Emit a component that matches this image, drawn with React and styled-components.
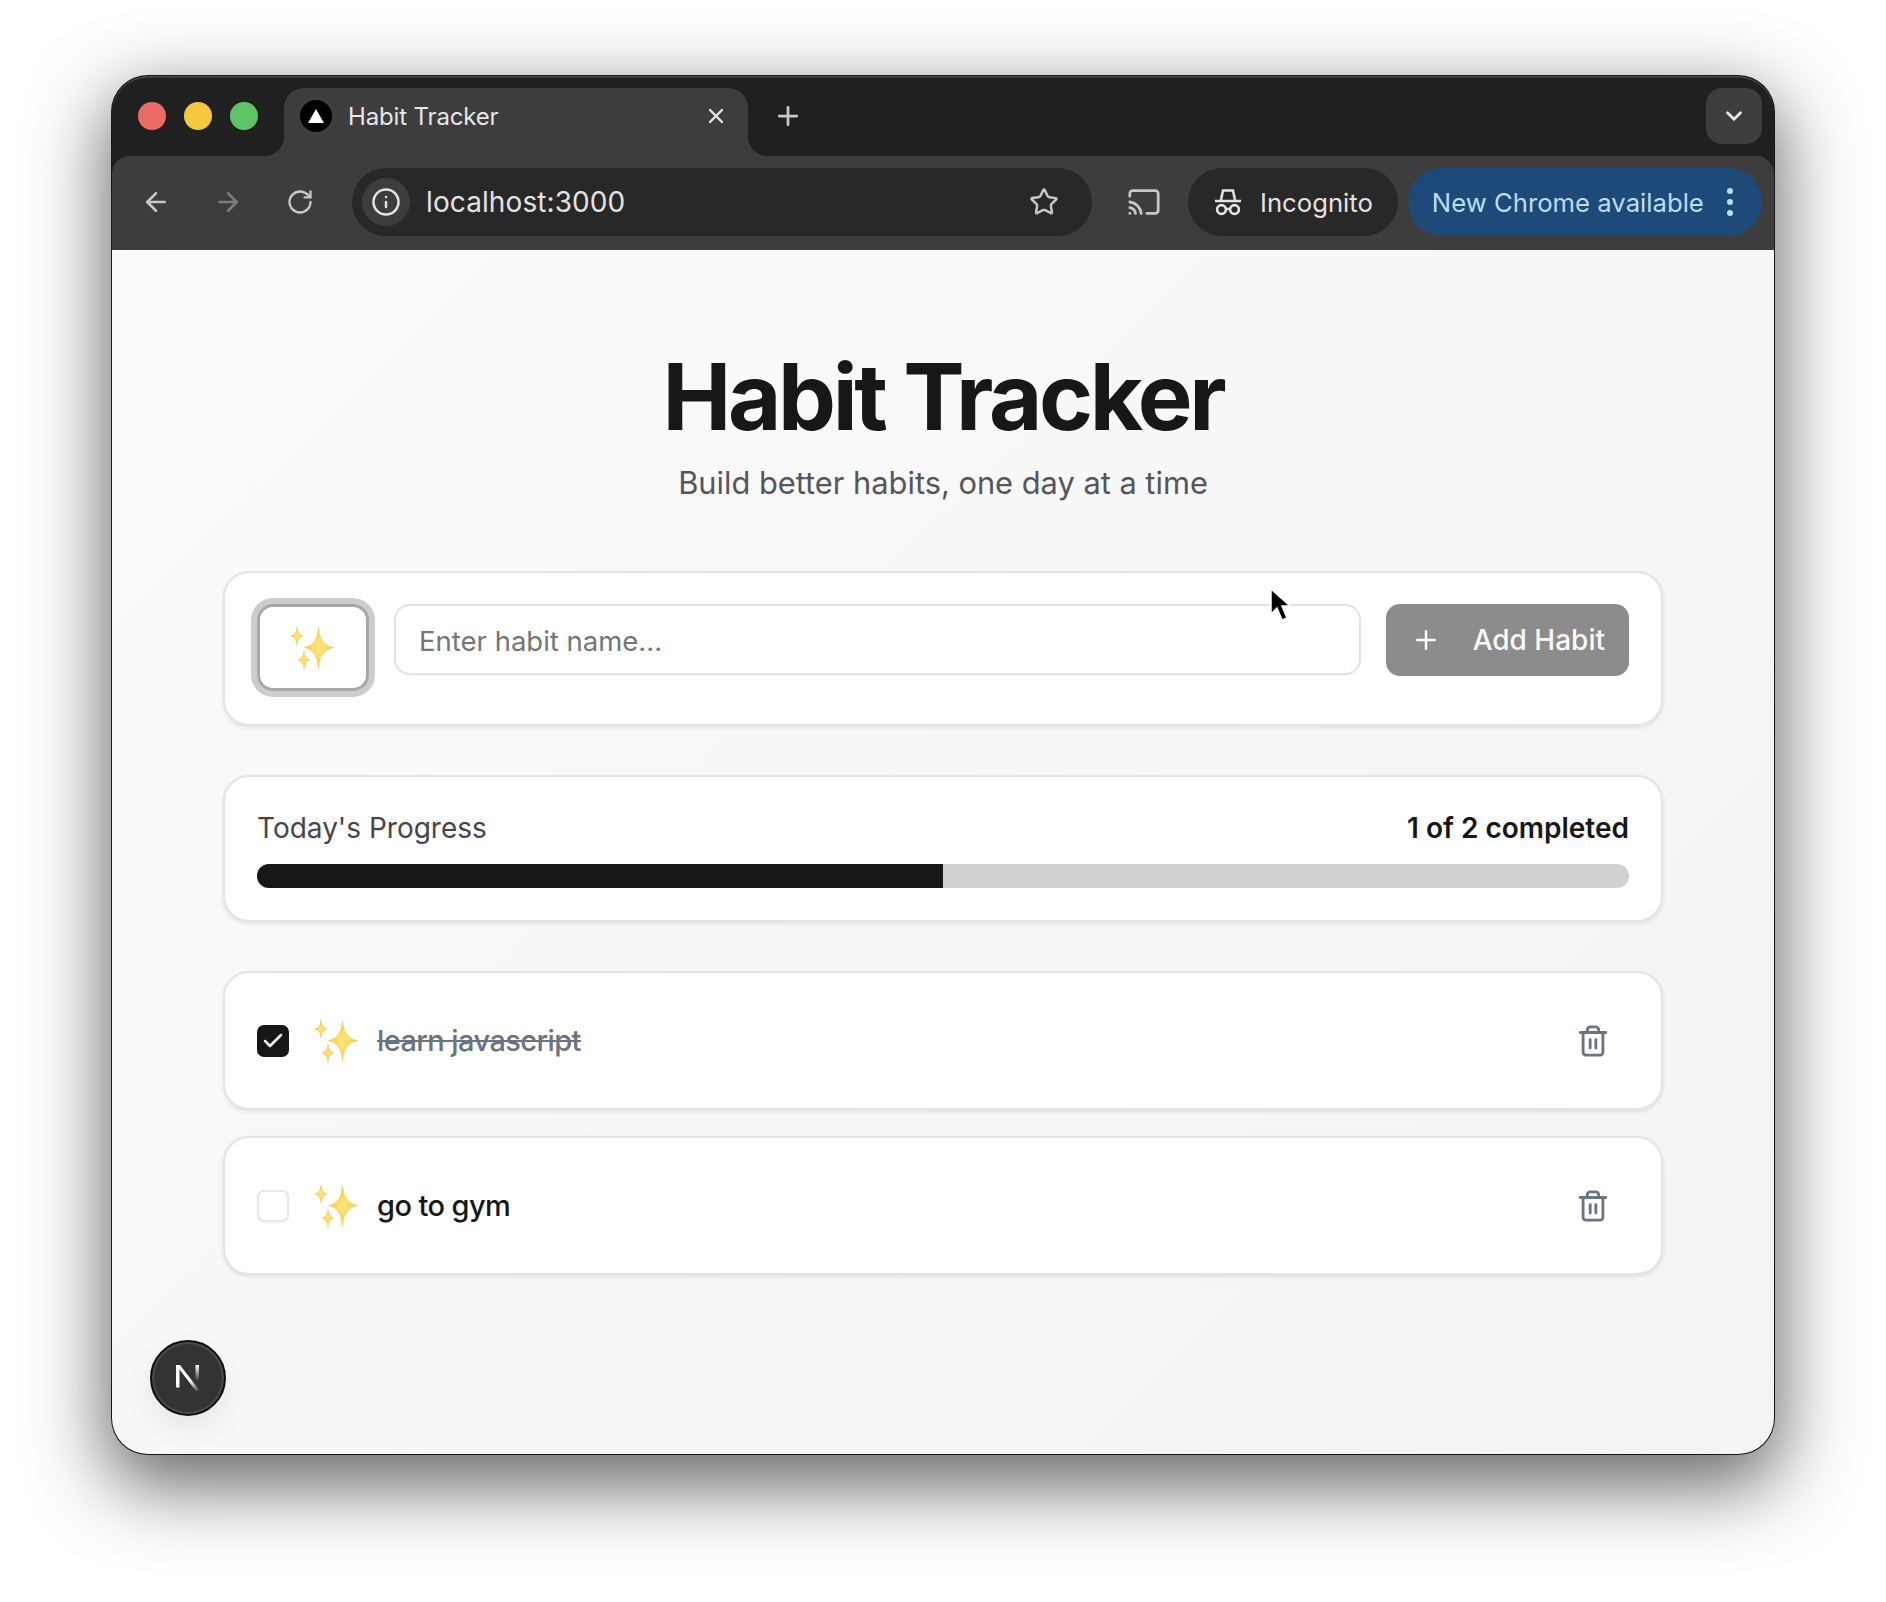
import React from 'react';
import styled, { createGlobalStyle } from 'styled-components';
import { ArrowLeft, ArrowRight, RotateCw, Info, Star, Cast, X, Plus, ChevronDown, Check, Trash2 } from 'lucide-react';

const Global = createGlobalStyle`
  html, body { margin: 0; padding: 0; background: #fff; }
  body { font-family: Inter, "Liberation Sans", sans-serif; -webkit-font-smoothing: antialiased; }
  * { box-sizing: border-box; }
`;

const Page = styled.div`
  width: 1886px;
  height: 1602px;
  padding: 76px 112px 0;
  overflow: hidden;
`;
const Window = styled.div`
  width: 1662px;
  height: 1378px;
  border-radius: 36px;
  overflow: hidden;
  background: #202020;
  display: flex;
  flex-direction: column;
  box-shadow: 0 0 0 1px #161616, 0 26px 76px 6px rgba(0, 0, 0, 0.6);
`;
const TabBar = styled.div`
  height: 80px;
  flex: none;
  display: flex;
  align-items: flex-start;
  padding: 12px 12px 0 26px;
  background: #202020;
  border-radius: 36px 36px 0 0;
  box-shadow: inset 0 1.5px 0 #4a4a4a;
`;
const Lights = styled.div`
  display: flex;
  gap: 18px;
  margin-top: 14px;
  margin-right: 26px;
`;
const Light = styled.span`
  width: 28px;
  height: 28px;
  border-radius: 50%;
  background: ${p => p.$c};
`;
const Tab = styled.div`
  position: relative;
  width: 464px;
  height: 68px;
  background: #3d3d3d;
  border-radius: 20px 20px 0 0;
  display: flex;
  align-items: center;
  padding: 0 20px 12px 16px;
  color: #e6e6e6;
  font-size: 24px;
  &::before, &::after {
    content: '';
    position: absolute;
    bottom: 0;
    width: 20px;
    height: 20px;
  }
  &::before { left: -20px; background: radial-gradient(circle at 0 0, transparent 20px, #3d3d3d 20.5px); }
  &::after { right: -20px; background: radial-gradient(circle at 100% 0, transparent 20px, #3d3d3d 20.5px); }
`;
const Favicon = styled.span`
  width: 32px;
  height: 32px;
  border-radius: 50%;
  background: #000;
  flex: none;
  display: flex;
  align-items: center;
  justify-content: center;
  margin-right: 16px;
`;
const TabTitle = styled.span`
  flex: 1;
  letter-spacing: -0.15px;
`;
const NewTab = styled.div`
  margin: 13px 0 0 25px;
  color: #c8c8c8;
  display: flex;
`;
const TabList = styled.div`
  margin-left: auto;
  width: 56px;
  height: 56px;
  border-radius: 16px;
  background: #3d3d3d;
  color: #e6e6e6;
  display: flex;
  align-items: center;
  justify-content: center;
`;
const Toolbar = styled.div`
  height: 94px;
  flex: none;
  background: #3d3d3d;
  border-radius: 18px 18px 0 0;
  display: flex;
  align-items: center;
  padding: 0 12px 2px 29px;
`;
const NavBtn = styled.span`
  display: flex;
  color: ${p => (p.$dim ? '#7d7d7d' : '#c7c7c7')};
  margin-right: ${p => p.$mr}px;
`;
const Omni = styled.div`
  width: 740px;
  height: 68px;
  flex: none;
  border-radius: 34px;
  background: #282828;
  display: flex;
  align-items: center;
  padding: 0 33px 0 10px;
  color: #e3e3e3;
`;
const InfoChip = styled.span`
  width: 48px;
  height: 48px;
  border-radius: 50%;
  background: #3d3d3d;
  display: flex;
  align-items: center;
  justify-content: center;
  margin-right: 16px;
`;
const Url = styled.span`
  flex: 1;
  font-size: 28px;
  letter-spacing: 0.1px;
`;
const CastWrap = styled.span`
  display: flex;
  color: #c7c7c7;
  margin: 0 27px 0 35px;
`;
const Pill = styled.div`
  height: 68px;
  border-radius: 34px;
  flex: none;
  display: flex;
  align-items: center;
  background: ${p => p.$bg};
  color: ${p => p.$fg};
  font-size: 25.7px;
  padding: ${p => p.$pad};
  margin-right: ${p => p.$mr || 0}px;
`;
const PillText = styled.span`
  margin-left: ${p => p.$ml || 0}px;
  white-space: nowrap;
`;
const Dots = styled.span`
  display: flex;
  flex-direction: column;
  gap: 5px;
  margin-left: 23px;
  & > i { width: 6px; height: 6px; border-radius: 50%; background: #bcdcf8; display: block; }
`;
const Content = styled.main`
  position: relative;
  flex: 1;
  background: linear-gradient(135deg, #fbfbfb, #f4f4f4);
  padding: 0 111px;
`;
const Header = styled.header`
  text-align: center;
  padding-top: 91px;
  margin-bottom: 66px;
`;
const Title = styled.h1`
  margin: 0;
  font-size: 92px;
  line-height: 112px;
  font-weight: 700;
  color: #171717;
  letter-spacing: -0.036em;
`;
const Sub = styled.p`
  margin: 8px 0 0;
  font-size: 30.8px;
  line-height: 44px;
  color: #55555c;
`;
const Card = styled.section`
  background: #fff;
  border: 2px solid #e4e4e4;
  border-radius: 26px;
  box-shadow: 0 2px 4px rgba(0, 0, 0, 0.09);
`;
const AddCard = styled(Card)`
  height: 155px;
  padding: 31px 32px 0 32px;
  display: flex;
  align-items: flex-start;
  gap: 25px;
  margin-bottom: 49px;
`;
const EmojiBtn = styled.div`
  width: 112px;
  height: 87px;
  flex: none;
  padding-right: 2px;
  border: 3px solid #a8a8a8;
  border-radius: 16px;
  background: #fff;
  box-shadow: 0 0 0 6px #cdcdcd;
  display: flex;
  align-items: center;
  justify-content: center;
`;
const NameInput = styled.input`
  flex: 1;
  min-width: 0;
  height: 71px;
  border: 2px solid #e3e3e3;
  border-radius: 16px;
  background: #fff;
  padding: 2px 23px 0;
  font: 400 27.5px Inter, sans-serif;
  color: #171717;
  outline: none;
  box-shadow: 0 1px 2px rgba(0, 0, 0, 0.05);
  &::placeholder { color: #757575; opacity: 1; }
`;
const AddBtn = styled.div`
  width: 243px;
  height: 72px;
  flex: none;
  border-radius: 14px;
  background: #8c8c8c;
  color: #fafafa;
  font-size: 28px;
  font-weight: 500;
  display: flex;
  align-items: center;
  padding: 0 24px 0 25px;
  justify-content: space-between;
`;
const ProgressCard = styled(Card)`
  height: 147px;
  padding: 32px 32px 0;
  margin-bottom: 49px;
`;
const ProgressHead = styled.div`
  display: flex;
  justify-content: space-between;
  align-items: center;
  line-height: 38px;
  margin-bottom: 17px;
`;
const ProgressLabel = styled.span`
  color: #45454a;
  font-size: 28px;
  font-weight: 400;
`;
const ProgressCount = styled.span`
  color: #171717;
  font-size: 28px;
  font-weight: 600;
`;
const Track = styled.div`
  height: 24px;
  border-radius: 12px;
  background: #d1d1d1;
  overflow: hidden;
`;
const Fill = styled.div`
  height: 100%;
  background: #171717;
`;
const HabitList = styled.div`
  display: flex;
  flex-direction: column;
  gap: 26px;
`;
const HabitCard = styled(Card)`
  height: 139px;
  display: flex;
  align-items: center;
  padding: 0 51px 0 32px;
`;
const Box = styled.span`
  width: 32px;
  height: 32px;
  flex: none;
  border-radius: 7px;
  display: flex;
  align-items: center;
  justify-content: center;
  background: ${p => (p.$on ? '#171717' : '#fff')};
  border: ${p => (p.$on ? 'none' : '2px solid #e8e8e8')};
  color: #fff;
  box-shadow: ${p => (p.$on ? 'none' : '0 1px 2px rgba(0,0,0,.05)')};
  margin-right: 26px;
`;
const HabitName = styled.span`
  flex: 1;
  margin-left: 19px;
  font-size: 29px;
  font-weight: 500;
  letter-spacing: -0.02em;
  color: ${p => (p.$done ? '#6b7280' : '#171717')};
  text-decoration: ${p => (p.$done ? 'line-through' : 'none')};
`;
const TrashBtn = styled.span`
  display: flex;
  color: #6b7280;
`;
const DevBadge = styled.div`
  position: absolute;
  left: 38px;
  bottom: 38px;
  width: 76px;
  height: 76px;
  border-radius: 50%;
  background: #333;
  border: 2px solid #111;
  box-shadow: inset 0 0 0 2px #4a4a4a, 0 12px 30px rgba(0, 0, 0, 0.08);
  display: flex;
  align-items: center;
  justify-content: center;
`;
const Cursor = styled.svg`
  position: absolute;
  left: 1156px;
  top: 337px;
`;

const Sparkles = () => (
  <svg width="43" height="42" viewBox="0 0 43 42">
    <defs>
      <radialGradient id="sp" cx="0.5" cy="0.5" r="0.6">
        <stop offset="0" stopColor="#ffe680" />
        <stop offset="0.55" stopColor="#fbd555" />
        <stop offset="1" stopColor="#eca93a" />
      </radialGradient>
    </defs>
    <g fill="url(#sp)" stroke="#efb84a" strokeWidth="0.4">
      <path d="M27.5 0.5 Q28.5 18 42.5 20.5 Q28.5 23 27.5 41.5 Q26.5 23 13.5 20.5 Q26.5 18 27.5 0.5Z" />
      <path d="M6 0 Q6.7 7.6 12 9 Q6.7 10.4 6 18 Q5.3 10.4 0 9 Q5.3 7.6 6 0Z" />
      <path d="M13 24 Q13.7 31.6 19 33 Q13.7 34.4 13 42 Q12.3 34.4 7 33 Q12.3 31.6 13 24Z" />
    </g>
  </svg>
);

const Incognito = () => (
  <svg width="30" height="30" viewBox="0 0 30 30" fill="none" stroke="#e3e3e3" strokeWidth="2.6">
    <path d="M8 13 L10 3.5 H20 L22 13" />
    <path d="M2 14 H28" />
    <circle cx="8.5" cy="22.5" r="4.4" />
    <circle cx="21.5" cy="22.5" r="4.4" />
    <path d="M13 22 H17" />
  </svg>
);

const NLogo = () => (
  <svg width="26" height="28" viewBox="0 0 26 28">
    <defs>
      <linearGradient id="nd" x1="0" y1="0" x2="1" y2="1">
        <stop offset="0.6" stopColor="#fff" />
        <stop offset="1" stopColor="#fff" stopOpacity="0" />
      </linearGradient>
      <linearGradient id="nr" x1="0" y1="0" x2="0" y2="1">
        <stop offset="0" stopColor="#fff" />
        <stop offset="0.9" stopColor="#fff" stopOpacity="0" />
      </linearGradient>
    </defs>
    <rect x="1" y="1" width="3.5" height="22.5" fill="#fff" />
    <path d="M1 1 H5 L25 27 H21Z" fill="url(#nd)" />
    <rect x="20.5" y="1" width="3.5" height="18" fill="url(#nr)" />
  </svg>
);

const Trash = () => (
  <TrashBtn><Trash2 size={34} strokeWidth={2} /></TrashBtn>
);

const Habit = ({ done, name }) => (
  <HabitCard>
    <Box $on={done}>{done && <Check size={24} strokeWidth={2.5} />}</Box>
    <Sparkles />
    <HabitName $done={done}>{name}</HabitName>
    <Trash />
  </HabitCard>
);

export default function App() {
  return (
    <Page>
      <Global />
      <Window>
        <TabBar>
          <Lights>
            <Light $c="#ee6a67" />
            <Light $c="#f4c93f" />
            <Light $c="#5fc466" />
          </Lights>
          <Tab>
            <Favicon>
              <svg width="16" height="14" viewBox="0 0 16 14"><path d="M8 0 L16 14 H0Z" fill="#fff" /></svg>
            </Favicon>
            <TabTitle>Habit Tracker</TabTitle>
            <X size={24} strokeWidth={2.4} color="#e3e3e3" />
          </Tab>
          <NewTab><Plus size={30} strokeWidth={2.2} /></NewTab>
          <TabList><ChevronDown size={26} strokeWidth={2.6} /></TabList>
        </TabBar>
        <Toolbar>
          <NavBtn $mr={42}><ArrowLeft size={30} strokeWidth={2} /></NavBtn>
          <NavBtn $dim $mr={43}><ArrowRight size={30} strokeWidth={2} /></NavBtn>
          <NavBtn $mr={38}><RotateCw size={28} strokeWidth={2} /></NavBtn>
          <Omni>
            <InfoChip><Info size={30} strokeWidth={2} /></InfoChip>
            <Url>localhost:3000</Url>
            <Star size={30} strokeWidth={2} color="#c7c7c7" />
          </Omni>
          <CastWrap><Cast size={34} strokeWidth={2} /></CastWrap>
          <Pill $bg="#282828" $fg="#e3e3e3" $pad="0 25px 0 25px" $mr={10}>
            <Incognito />
            <PillText $ml={17}>Incognito</PillText>
          </Pill>
          <Pill $bg="#1d4a78" $fg="#bcdcf8" $pad="0 29px 0 24px">
            <PillText>New Chrome available</PillText>
            <Dots><i /><i /><i /></Dots>
          </Pill>
        </Toolbar>
        <Content>
          <Header>
            <Title>Habit Tracker</Title>
            <Sub>Build better habits, one day at a time</Sub>
          </Header>
          <AddCard>
            <EmojiBtn><Sparkles /></EmojiBtn>
            <NameInput placeholder="Enter habit name..." />
            <AddBtn><Plus size={30} strokeWidth={2} />Add Habit</AddBtn>
          </AddCard>
          <ProgressCard>
            <ProgressHead>
              <ProgressLabel>Today's Progress</ProgressLabel>
              <ProgressCount>1 of 2 completed</ProgressCount>
            </ProgressHead>
            <Track><Fill style={{ width: `${(1 / 2) * 100}%` }} /></Track>
          </ProgressCard>
          <HabitList>
            <Habit done name="learn javascript" />
            <Habit name="go to gym" />
          </HabitList>
          <DevBadge><NLogo /></DevBadge>
          <Cursor width="24" height="36" viewBox="0 0 24 36">
            <path d="M3 2 V27 L9 21 L14 33 L19 31 L14 19 H22Z" fill="#000" stroke="#fff" strokeWidth="1.5" />
          </Cursor>
        </Content>
      </Window>
    </Page>
  );
}
